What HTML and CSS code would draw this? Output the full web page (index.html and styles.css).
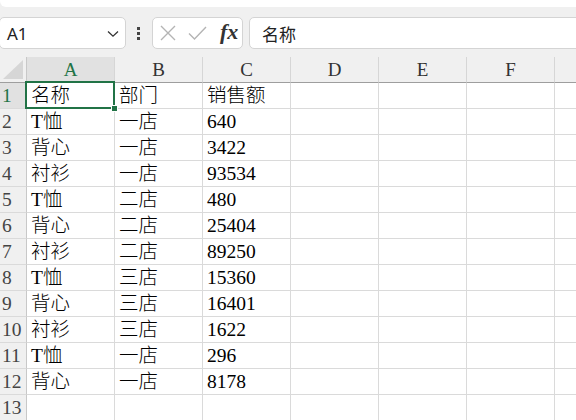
FILE: index.html
```html
<!DOCTYPE html>
<html>
<head>
<meta charset="utf-8">
<link rel="stylesheet" href="styles.css">
</head>
<body>
<div class="app">
  <div class="ribbon"></div>
  <div class="fbar">
    <div class="namebox">
      <span class="ref">A1</span>
      <svg class="chev" width="12" height="8" viewBox="0 0 12 8"><path d="M1 1.5 L6 6.2 L11 1.5" fill="none" stroke="#333" stroke-width="1.3"/></svg>
    </div>
    <div class="dots"><i></i><i></i><i></i></div>
    <div class="fbtns">
      <svg width="18" height="16" viewBox="0 0 18 16"><path d="M2 1 L16 15 M16 1 L2 15" stroke="#b4b4b4" stroke-width="1.4" fill="none"/></svg>
      <svg width="19" height="14" viewBox="0 0 19 14"><path d="M1 7.5 L6.5 13 L18 1" stroke="#b4b4b4" stroke-width="1.4" fill="none"/></svg>
      <span class="fx">fx</span>
    </div>
    <div class="finput">名称</div>
  </div>
  <table class="sheet">
    <colgroup>
      <col class="rhc"><col class="cc"><col class="cc"><col class="cc"><col class="cc"><col class="cc"><col class="cc"><col class="cc">
    </colgroup>
    <thead>
      <tr>
        <th class="corner"><svg width="26" height="25" viewBox="0 0 26 25"><polygon points="3,22 23,22 23,3" fill="#d6d6d6"/></svg></th>
        <th class="selh">A</th><th>B</th><th>C</th><th>D</th><th>E</th><th>F</th><th></th>
      </tr>
    </thead>
    <tbody>
      <tr><th class="selr">1</th><td class="sel">名称</td><td>部门</td><td>销售额</td><td></td><td></td><td></td><td></td></tr>
      <tr><th>2</th><td>T恤</td><td>一店</td><td>640</td><td></td><td></td><td></td><td></td></tr>
      <tr><th>3</th><td>背心</td><td>一店</td><td>3422</td><td></td><td></td><td></td><td></td></tr>
      <tr><th>4</th><td>衬衫</td><td>一店</td><td>93534</td><td></td><td></td><td></td><td></td></tr>
      <tr><th>5</th><td>T恤</td><td>二店</td><td>480</td><td></td><td></td><td></td><td></td></tr>
      <tr><th>6</th><td>背心</td><td>二店</td><td>25404</td><td></td><td></td><td></td><td></td></tr>
      <tr><th>7</th><td>衬衫</td><td>二店</td><td>89250</td><td></td><td></td><td></td><td></td></tr>
      <tr><th>8</th><td>T恤</td><td>三店</td><td>15360</td><td></td><td></td><td></td><td></td></tr>
      <tr><th>9</th><td>背心</td><td>三店</td><td>16401</td><td></td><td></td><td></td><td></td></tr>
      <tr><th>10</th><td>衬衫</td><td>三店</td><td>1622</td><td></td><td></td><td></td><td></td></tr>
      <tr><th>11</th><td>T恤</td><td>一店</td><td>296</td><td></td><td></td><td></td><td></td></tr>
      <tr><th>12</th><td>背心</td><td>一店</td><td>8178</td><td></td><td></td><td></td><td></td></tr>
      <tr class="last"><th>13</th><td></td><td></td><td></td><td></td><td></td><td></td><td></td></tr>
    </tbody>
  </table>
</div>
</body>
</html>
```

FILE: styles.css
```css
html, body {
  margin: 0;
  padding: 0;
  width: 576px;
  height: 420px;
  overflow: hidden;
  background: #ffffff;
}
.app {
  width: 576px;
  height: 420px;
  overflow: hidden;
  background: #f0f0f0;
}
.ribbon {
  height: 7px;
  background: #ffffff;
  border-bottom-left-radius: 6px;
}
.fbar {
  display: flex;
  align-items: center;
  height: 32px;
  margin-top: 10px;
  margin-bottom: 8px;
}
.namebox {
  box-sizing: border-box;
  width: 127px;
  height: 32px;
  margin-left: -1px;
  background: #fff;
  border: 1px solid #d4d4d4;
  border-radius: 5px;
  display: flex;
  align-items: center;
  justify-content: space-between;
  padding: 0 6px 0 7px;
  font-family: "Noto Sans", "Open Sans", sans-serif;
  font-size: 17px;
  color: #222;
}
.chev { margin-top: 1px; }
.dots {
  display: flex;
  flex-direction: column;
  gap: 2px;
  margin-left: 11px;
  width: 15px;
}
.dots i {
  display: block;
  width: 3px;
  height: 3px;
  background: #444;
}
.fbtns {
  box-sizing: border-box;
  width: 91px;
  height: 32px;
  background: #fff;
  border: 1px solid #d4d4d4;
  border-radius: 5px;
  display: flex;
  align-items: center;
  padding-left: 6px;
  gap: 11px;
}
.fbtns svg { display: block; }
.fx {
  font-family: "Liberation Serif", serif;
  font-style: italic;
  font-weight: bold;
  font-size: 22px;
  color: #333;
  margin-left: 2px;
  margin-top: -2px;
}
.finput {
  box-sizing: border-box;
  flex: 1;
  height: 32px;
  margin-left: 6px;
  margin-right: -6px;
  background: #fff;
  border: 1px solid #d4d4d4;
  border-radius: 5px;
  padding-left: 12px;
  display: flex;
  align-items: center;
  font-family: "Noto Sans CJK SC", sans-serif;
  font-size: 17px;
  color: #222;
}
.sheet {
  table-layout: fixed;
  border-collapse: separate;
  border-spacing: 0;
  width: 643px;
  background: #fff;
}
.rhc { width: 27px; }
.cc { width: 88px; }
.sheet th, .sheet td {
  box-sizing: border-box;
  padding: 0;
  height: 26px;
  border-right: 1px solid #dadada;
  border-bottom: 1px solid #dadada;
  overflow: visible;
  white-space: nowrap;
}
.sheet thead th {
  background: #f0f0f0;
  border-bottom: 1px solid #9e9e9e;
  border-right: 1px solid #d6d6d6;
  font-family: "Liberation Serif", serif;
  font-weight: normal;
  font-size: 19px;
  color: #333;
  text-align: center;
  line-height: 24px;
}
.sheet thead th.corner {
  border-right: 1px solid #c8c8c8;
}
.corner svg { display: block; }
.sheet thead th.selh {
  background: #e1e1e1;
  color: #217346;
}
.sheet tbody th {
  background: #f0f0f0;
  border-right: 1px solid #c8c8c8;
  border-bottom: 1px solid #dadada;
  font-family: "Liberation Serif", serif;
  font-weight: normal;
  font-size: 19.5px;
  color: #444;
  text-align: left;
  padding-left: 2px;
  line-height: 25px;
}
.sheet tbody th.selr {
  background: #e1e1e1;
  color: #217346;
}
.sheet td {
  font-family: "Liberation Serif", "Noto Sans CJK SC", serif;
  font-weight: 300;
  font-size: 19.5px;
  color: #000;
  padding-left: 4px;
  line-height: 25px;
}
.sheet tr.last th, .sheet tr.last td {
  height: 24px;
}
td.sel {
  position: relative;
}
td.sel::after {
  content: "";
  position: absolute;
  left: -2px;
  top: -2px;
  right: -1px;
  bottom: -1px;
  border: 2px solid #217346;
}
td.sel::before {
  content: "";
  position: absolute;
  right: -4px;
  bottom: -4px;
  width: 5px;
  height: 5px;
  background: #217346;
  border: 1px solid #fff;
  z-index: 2;
}
```
